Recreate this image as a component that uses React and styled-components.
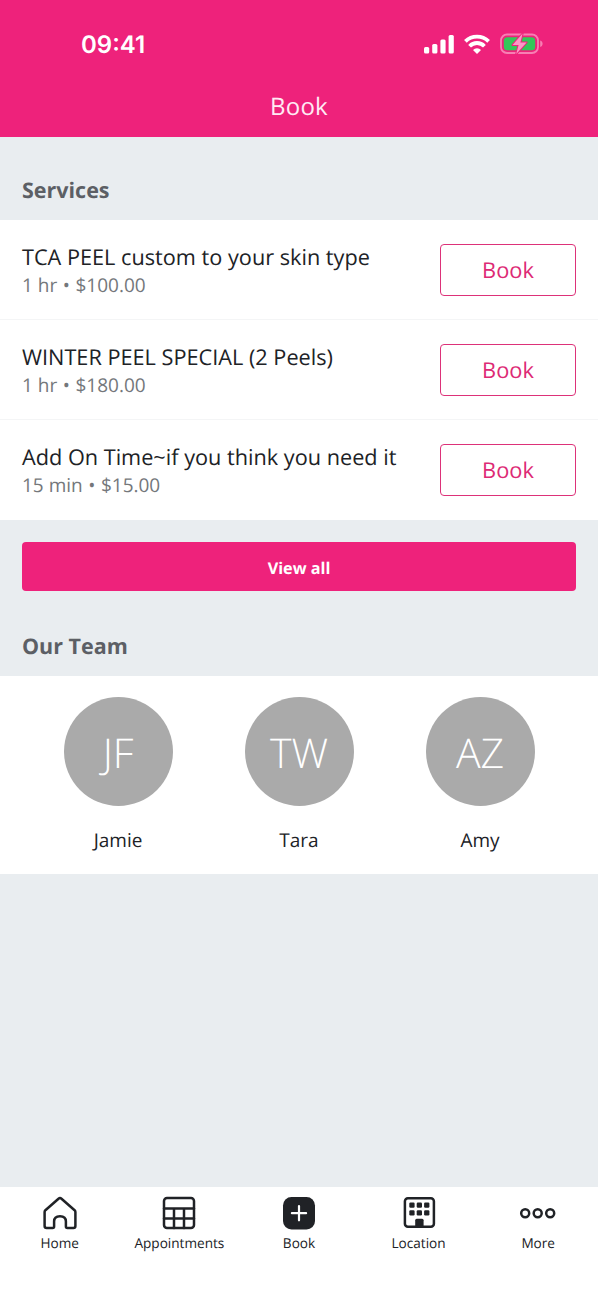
import React from 'react';
import styled, { createGlobalStyle } from 'styled-components';

const services = [
  { name: 'TCA PEEL custom to your skin type', time: '1 hr', price: '$100.00' },
  { name: 'WINTER PEEL SPECIAL (2 Peels)', time: '1 hr', price: '$180.00' },
  { name: 'Add On Time~if you think you need it', time: '15 min', price: '$15.00' },
];

const team = [
  { initials: 'JF', name: 'Jamie' },
  { initials: 'TW', name: 'Tara' },
  { initials: 'AZ', name: 'Amy' },
];

const SignalIcon = () => (
  <svg width="30" height="20" viewBox="0 0 30 20" fill="#fff">
    <rect x="0" y="13" width="5.2" height="6.5" rx="1.5" />
    <rect x="8.2" y="10" width="5.2" height="9.5" rx="1.5" />
    <rect x="16.4" y="5.5" width="5.2" height="14" rx="1.5" />
    <rect x="24.6" y="1" width="5.2" height="18.5" rx="1.5" />
  </svg>
);

const WifiIcon = () => (
  <svg width="26" height="20" viewBox="0 0 26 20" fill="none" stroke="#fff" strokeWidth="3.8">
    <path d="M1.4 7.3a16.5 16.5 0 0 1 23.2 0" />
    <path d="M5.6 12.2a10.2 10.2 0 0 1 14.8 0" />
    <path d="M13 20l-4-4a5.6 5.6 0 0 1 8 0z" fill="#fff" stroke="none" />
  </svg>
);

const BatteryIcon = () => (
  <svg width="43" height="22" viewBox="0 0 43 22">
    <rect x="1" y="1.5" width="37" height="18.5" rx="6" fill="none" stroke="#f77fb3" strokeWidth="1.8" />
    <rect x="3.8" y="4.3" width="31.4" height="13" rx="3.5" fill="#34c759" />
    <path d="M40.2 7.5c1.6.7 2.4 1.7 2.4 3.2s-.8 2.6-2.4 3.3z" fill="#f77fb3" />
    <path
      d="M22.6 0.6L12.6 12h6l-2.4 9 10.4-11.6h-6.2z"
      fill="#fa98c6"
      stroke="#ee227b"
      strokeWidth="2"
      strokeLinejoin="round"
      paintOrder="stroke"
    />
  </svg>
);

const HomeIcon = () => (
  <NavSvg viewBox="0 0 34 34">
    <path d="M1.6 30V16q0-1 .8-1.8L15.5 2.7q1.5-1.3 3 0l13.1 11.5q.8.8.8 1.8V30q0 2-2 2h-6q-1.5 0-1.5-1.5V25.5q0-5.3-5.9-5.3t-5.9 5.3v5q0 1.5-1.5 1.5h-6q-2 0-2-2z" />
  </NavSvg>
);

const CalendarIcon = () => (
  <NavSvg viewBox="0 0 34 34">
    <rect x="2" y="2" width="30" height="30" rx="3" />
    <path d="M2 12.5h30M2 22.5h30M12 12.5V32M22 12.5V32" />
  </NavSvg>
);

const BookIcon = () => (
  <NavSvg viewBox="0 0 34 34">
    <rect x="1" y="1" width="32" height="32.5" rx="8.5" fill="#202226" stroke="none" />
    <path d="M17 10.1v14.2M9.9 17.2h14.2" stroke="#fff" strokeWidth="2.2" />
  </NavSvg>
);

const BuildingIcon = () => (
  <NavSvg viewBox="0 0 34 34">
    <rect x="2.9" y="2.2" width="29" height="28.6" rx="3" />
    <g fill="#202226" stroke="none">
      {[7.3, 14.7, 22.1].map((x) => (
        <React.Fragment key={x}>
          <rect x={x} y="6.6" width="5.3" height="5.2" rx="1.2" />
          <rect x={x} y="14.2" width="5.3" height="5.2" rx="1.2" />
        </React.Fragment>
      ))}
      <path d="M13.2 31v-6.8q0-1.5 1.5-1.5h5.4q1.5 0 1.5 1.5V31z" />
    </g>
  </NavSvg>
);

const MoreIcon = () => (
  <NavSvg $wide viewBox="0 0 38 34">
    <circle cx="6.2" cy="17.3" r="4" />
    <circle cx="18.7" cy="17.3" r="4" />
    <circle cx="31.2" cy="17.3" r="4" />
  </NavSvg>
);

const navItems = [
  { label: 'Home', Icon: HomeIcon },
  { label: 'Appointments', Icon: CalendarIcon },
  { label: 'Book', Icon: BookIcon },
  { label: 'Location', Icon: BuildingIcon },
  { label: 'More', Icon: MoreIcon },
];

const App = () => (
  <Screen>
    <GlobalStyle />
    <Header>
      <StatusBar>
        <Clock>09:41</Clock>
        <StatusIcons>
          <SignalIcon />
          <WifiIcon />
          <BatteryIcon />
        </StatusIcons>
      </StatusBar>
      <Title>Book</Title>
    </Header>
    <Main>
      <SectionTitle>Services</SectionTitle>
      <ServiceList>
        {services.map((service) => (
          <ServiceRow key={service.name}>
            <div>
              <ServiceName>{service.name}</ServiceName>
              <ServiceInfo>
                {service.time} <Dot>•</Dot> {service.price}
              </ServiceInfo>
            </div>
            <BookButton>Book</BookButton>
          </ServiceRow>
        ))}
      </ServiceList>
      <ViewAllButton>View all</ViewAllButton>
      <SectionTitle $team>Our Team</SectionTitle>
      <Team>
        {team.map((member) => (
          <Member key={member.name}>
            <Avatar>{member.initials}</Avatar>
            <MemberName>{member.name}</MemberName>
          </Member>
        ))}
      </Team>
    </Main>
    <Nav>
      {navItems.map(({ label, Icon }) => (
        <NavItem key={label}>
          <Icon />
          <span>{label}</span>
        </NavItem>
      ))}
    </Nav>
  </Screen>
);

export default App;

const GlobalStyle = createGlobalStyle`
  * {
    box-sizing: border-box;
  }

  body {
    margin: 0;
    font-family: 'Open Sans', 'Noto Sans', sans-serif;
    color: #202226;
    text-rendering: geometricPrecision;
  }

  p,
  h1,
  h2,
  ul {
    margin: 0;
    padding: 0;
  }

  button {
    font-family: inherit;
    padding: 0;
    text-rendering: inherit;
  }
`;

const Screen = styled.div`
  display: flex;
  flex-direction: column;
  width: 598px;
  height: 1300px;
  overflow: hidden;
  background: #e9edf0;
`;

const Header = styled.header`
  height: 137px;
  background: #ee227b;
  color: #fff;
`;

const StatusBar = styled.div`
  display: flex;
  align-items: center;
  justify-content: space-between;
  height: 88px;
  padding: 0 55px 0 81px;
`;

const Clock = styled.span`
  padding-top: 2px;
  font-family: 'Inter', sans-serif;
  font-size: 24px;
  font-weight: 600;
  line-height: 30px;
`;

const StatusIcons = styled.div`
  display: flex;
  align-items: center;
  gap: 10px;
`;

const Title = styled.h1`
  font-size: 24px;
  font-weight: 400;
  line-height: 38px;
  letter-spacing: 0.2px;
  text-align: center;
  color: #ffeaf4;
`;

const Main = styled.main`
  flex: 1;
`;

const SectionTitle = styled.h2`
  height: ${(props) => (props.$team ? '85px' : '83px')};
  padding: ${(props) => (props.$team ? '40px' : '38px')} 22px 0;
  font-size: 21.5px;
  font-weight: 700;
  line-height: 31px;
  color: #5c5f65;
`;

const ServiceList = styled.ul`
  list-style: none;
  background: #fff;
`;

const ServiceRow = styled.li`
  display: flex;
  align-items: center;
  justify-content: space-between;
  height: 100px;
  padding: 0 22px;
  border-bottom: 1px solid #f4f5f6;

  &:last-child {
    border-bottom: none;
  }
`;

const ServiceName = styled.p`
  padding-top: 1px;
  font-size: 21.7px;
  line-height: 30px;
`;

const ServiceInfo = styled.p`
  font-size: 19px;
  line-height: 25px;
  color: #74777b;
`;

const Dot = styled.span`
  margin: 0 0.6px;
`;

const BookButton = styled.button`
  width: 136px;
  height: 52px;
  padding-top: 1px;
  border: 1.5px solid #dd3279;
  border-radius: 4px;
  background: #fff;
  color: #dd2a75;
  font-size: 21.8px;
`;

const ViewAllButton = styled.button`
  display: block;
  width: 554px;
  height: 49px;
  margin: 22px 22px 0;
  padding-top: 2px;
  border: none;
  border-radius: 4px;
  background: #ee227b;
  color: #fff;
  font-size: 16.2px;
  font-weight: 700;
`;

const Team = styled.div`
  display: flex;
  justify-content: center;
  height: 198px;
  padding-top: 21px;
  background: #fff;
`;

const Member = styled.div`
  display: flex;
  flex-direction: column;
  align-items: center;
  width: 181px;
`;

const Avatar = styled.div`
  display: flex;
  align-items: center;
  justify-content: center;
  width: 109px;
  height: 109px;
  padding-top: 2px;
  border-radius: 50%;
  background: #aaa;
  color: #fff;
  font-size: 41px;
  font-weight: 300;
`;

const MemberName = styled.p`
  margin-top: 21px;
  font-size: 19px;
  line-height: 26px;
`;

const Nav = styled.nav`
  display: flex;
  height: 113px;
  padding-top: 9px;
  background: #fff;
`;

const NavItem = styled.div`
  display: flex;
  flex: 1;
  flex-direction: column;
  align-items: center;
  gap: 3px;
  font-size: 13.6px;
  line-height: 20px;
`;

const NavSvg = styled.svg`
  width: ${(props) => (props.$wide ? '38px' : '34px')};
  height: 34px;
  fill: none;
  stroke: #202226;
  stroke-width: 2.5;
  stroke-linecap: round;
  stroke-linejoin: round;
`;
